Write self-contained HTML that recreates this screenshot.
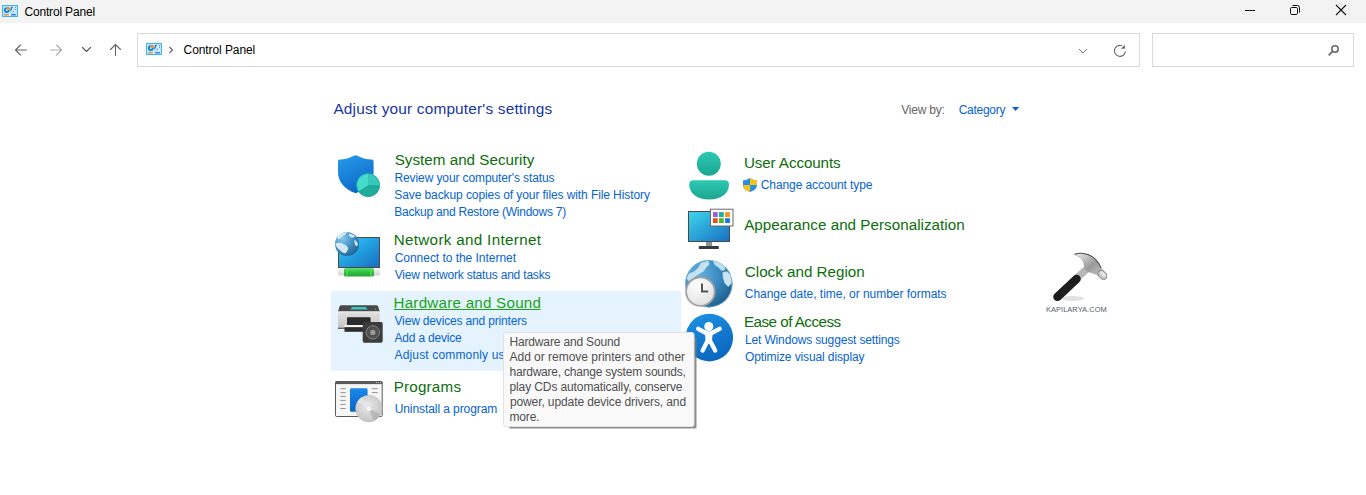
<!DOCTYPE html>
<html><head><meta charset="utf-8"><title>Control Panel</title>
<style>
html,body{margin:0;padding:0;width:1366px;height:495px;overflow:hidden;background:#fff}
svg{position:absolute;left:0;top:0;font-family:"Liberation Sans",sans-serif}
</style></head><body>
<svg width="1366" height="495" viewBox="0 0 1366 495">
<defs>
 <filter id="tipblur" x="-10%" y="-10%" width="120%" height="120%"><feGaussianBlur stdDeviation="0.7"/></filter>
 <linearGradient id="cpbg" x1="0" y1="0" x2="0" y2="1"><stop offset="0" stop-color="#c6ecff"/><stop offset="1" stop-color="#8fd2f6"/></linearGradient>
 <g id="cpicon">
  <rect x="0.5" y="0.5" width="15" height="11" fill="#bfe5fa" stroke="#3db5f2" stroke-width="1"/>
  <path d="M4.8,2.2 A2.9,2.9 0 1 0 7.7,5.1 L4.8,5.1 Z" fill="#1c80d8"/>
  <circle cx="4.9" cy="5.0" r="1.1" fill="#bfe5fa"/>
  <path d="M5.1,1.7 A3.1,3.1 0 0 1 8.2,4.8 L5.1,4.8 Z" fill="#f28a16"/>
  <path d="M10.8,2.3 Q9.3,2 9.3,3.6 Q9.3,5.3 8.3,5.6" fill="none" stroke="#1a5db4" stroke-width="1.1"/>
  <rect x="11.2" y="2" width="2.6" height="1" fill="#ffffff"/>
  <rect x="11.2" y="4" width="2.6" height="1" fill="#ffffff"/>
  <rect x="11.2" y="6" width="2.6" height="1" fill="#ffffff"/>
  <circle cx="13.3" cy="2.5" r="0.6" fill="#1c70d0"/>
  <circle cx="13.3" cy="4.5" r="0.6" fill="#1c70d0"/>
  <circle cx="11.6" cy="6.5" r="0.6" fill="#1c70d0"/>
  <rect x="2" y="9.2" width="4.9" height="1.2" fill="#f28a16"/>
  <rect x="6.9" y="9.2" width="1.8" height="1.2" fill="#ffffff"/>
  <rect x="9.1" y="9.2" width="4.7" height="1.2" fill="#1c70d0"/>
 </g>
 <linearGradient id="shieldg" x1="0" y1="0" x2="0.4" y2="1"><stop offset="0" stop-color="#279ceb"/><stop offset="1" stop-color="#0d6ac8"/></linearGradient>
 <linearGradient id="netscr" x1="0" y1="0" x2="1" y2="1"><stop offset="0" stop-color="#3ccdf2"/><stop offset="0.45" stop-color="#22a4e2"/><stop offset="1" stop-color="#1a6cc0"/></linearGradient>
 <radialGradient id="globeg" cx="0.3" cy="0.25" r="0.85"><stop offset="0" stop-color="#8ccaec"/><stop offset="0.45" stop-color="#4a98cc"/><stop offset="1" stop-color="#1f5e90"/></radialGradient>
 <linearGradient id="cableg" x1="0" y1="0" x2="0" y2="1"><stop offset="0" stop-color="#5fe06a"/><stop offset="0.5" stop-color="#2fc03e"/><stop offset="1" stop-color="#27a535"/></linearGradient>
 <linearGradient id="cablew" x1="0" y1="0" x2="0" y2="1"><stop offset="0" stop-color="#f4f4f4"/><stop offset="1" stop-color="#d0d0d0"/></linearGradient>
 <linearGradient id="userg" x1="0" y1="0" x2="0" y2="1"><stop offset="0" stop-color="#2cc9b4"/><stop offset="1" stop-color="#1ca68f"/></linearGradient>
 <linearGradient id="appscr" x1="0" y1="0" x2="1" y2="1"><stop offset="0" stop-color="#3fd6ea"/><stop offset="1" stop-color="#1670c4"/></linearGradient>
 <radialGradient id="clockg" cx="0.4" cy="0.3" r="0.75"><stop offset="0" stop-color="#ffffff"/><stop offset="1" stop-color="#e0e0e0"/></radialGradient>
 <linearGradient id="easeg" x1="0" y1="0" x2="0.4" y2="1"><stop offset="0" stop-color="#1e94e4"/><stop offset="1" stop-color="#0a68c0"/></linearGradient>
 <radialGradient id="cdg" cx="0.45" cy="0.4" r="0.6"><stop offset="0" stop-color="#f4f4f4"/><stop offset="0.3" stop-color="#dedede"/><stop offset="1" stop-color="#c4c4c4"/></radialGradient>
 <linearGradient id="prbody" x1="0" y1="0" x2="0" y2="1"><stop offset="0" stop-color="#e2e2e2"/><stop offset="1" stop-color="#c2c2c2"/></linearGradient>
 <linearGradient id="hamhead" x1="0" y1="0" x2="1" y2="1"><stop offset="0" stop-color="#f0f0f0"/><stop offset="0.5" stop-color="#9a9a9a"/><stop offset="1" stop-color="#d8d8d8"/></linearGradient>
 <linearGradient id="progblue" x1="0" y1="0" x2="0" y2="1"><stop offset="0" stop-color="#1a8ae8"/><stop offset="1" stop-color="#0a62c6"/></linearGradient>
 <radialGradient id="globe2" cx="0.3" cy="0.3" r="0.8"><stop offset="0" stop-color="#66b2de"/><stop offset="0.5" stop-color="#3b8cc2"/><stop offset="1" stop-color="#1c5d8a"/></radialGradient>
</defs>

<!-- title bar -->
<rect x="0" y="0" width="1366" height="23" fill="#f3f3f3"/>
<use href="#cpicon" x="2" y="5"/>
<!-- window controls -->
<g stroke="#111" stroke-width="1" fill="none">
 <path d="M1245,10.5 H1255"/>
 <rect x="1290.5" y="7.5" width="7" height="7" rx="1.2"/>
 <path d="M1292.5,5.5 H1297.5 Q1299.5,5.5 1299.5,7.5 V12.5"/>
 <path d="M1336,5 L1346,15 M1346,5 L1336,15" stroke-width="1.1"/>
</g>

<!-- nav -->
<g fill="none" stroke-linecap="round" stroke-linejoin="round">
 <path d="M15.5,50 H26.5 M20.5,45 L15.5,50 L20.5,55" stroke="#666" stroke-width="1.1"/>
 <path d="M50.5,50 H61.5 M56.5,45 L61.5,50 L56.5,55" stroke="#adadad" stroke-width="1.1"/>
 <path d="M82.5,47.5 L86.5,51.5 L90.5,47.5" stroke="#555" stroke-width="1.1"/>
 <path d="M115.5,44.5 V55.5 M110.5,49.5 L115.5,44.5 L120.5,49.5" stroke="#666" stroke-width="1.1"/>
</g>
<!-- address bar -->
<rect x="137.5" y="33.5" width="1002" height="33" fill="#fff" stroke="#d9d9d9" stroke-width="1"/>
<use href="#cpicon" x="146" y="43"/>
<path d="M169.5,47 L172.5,50 L169.5,53" fill="none" stroke="#666" stroke-width="1.2"/>
<path d="M1079,49 L1083,53 L1087,49" fill="none" stroke="#777" stroke-width="1"/>
<path d="M1121.8,45.7 A5.5,5.5 0 1 0 1125.4,51.4" fill="none" stroke="#6a6a6a" stroke-width="1.1"/>
<path d="M1120.9,48.7 L1124.9,48.7 L1124.9,44.7 Z" fill="#6a6a6a"/>
<rect x="1152.5" y="33.5" width="201" height="33" fill="#fff" stroke="#d9d9d9" stroke-width="1"/>
<circle cx="1335" cy="49" r="3.2" fill="none" stroke="#666" stroke-width="1.5"/>
<path d="M1328.6,55.4 L1332.6,51.4" stroke="#666" stroke-width="1.6"/>

<path d="M1012,107 H1019.2 L1015.6,110.9 Z" fill="#0664d0"/>
<!-- hover bg -->
<rect x="331" y="291" width="350" height="80" rx="1.5" fill="#e5f3ff"/>

<!-- System and Security icon -->
<path d="M338,161.2 Q338,159.6 339.8,159.6 C345,159.5 349.8,157.8 353.4,155.9 Q355.6,154.8 357.8,155.9 C361.4,157.8 366.2,159.5 371.8,159.6 Q373.6,159.6 373.6,161.2 L373.6,172 C373.6,182 366,189.5 355.6,193.2 C345,189.5 338,182 338,172 Z" fill="url(#shieldg)"/>
<circle cx="368.2" cy="185.2" r="11.6" fill="#22ad9c"/>
<path d="M368.2,185.2 L358.4,191.4 A11.6,11.6 0 0 1 368.2,173.6 Z" fill="#46dccd"/>
<path d="M368.2,185.2 L368.2,173.6 A11.6,11.6 0 0 1 379.8,185.2 Z" fill="#36cbbb"/>
<path d="M368.2,185.2 L379.8,185.2 A11.6,11.6 0 0 1 358.4,191.4 Z" fill="#21ab9a"/>
<circle cx="368.2" cy="185.2" r="11.3" fill="none" stroke="#1f9e8f" stroke-width="0.6" opacity="0.6"/>

<!-- Network icon -->
<rect x="338.5" y="237.5" width="41" height="30" fill="url(#netscr)" stroke="#4a4a4a" stroke-width="1"/>
<rect x="338" y="269" width="42" height="6.5" rx="1" fill="url(#cablew)"/>
<rect x="344" y="268" width="30" height="8.5" rx="1.5" fill="url(#cableg)"/>
<path d="M347,268.2 V276.3 M371,268.2 V276.3" stroke="#7ae884" stroke-width="0.8"/>
<circle cx="347" cy="244" r="12" fill="url(#globeg)"/>
<path d="M337.5,236.5 q4,-4 10,-4.5 q-2,3 -5,4 q-2,3 -4.5,3.5 Z M349,233.5 q4,0.5 6.5,3 q-2,1.5 -4,1 q-3,-1 -2.5,-4 Z M335.2,244 q4,-2.5 8,0 q4,1 5,4.5 q-1,4 -3.5,5 q-3,-1 -5,-3.5 q-3,-2 -4.5,-6 Z M354.5,239.5 q2.5,1.5 3.5,4.5 q-0.5,3 -2.5,1.5 q-1.5,-3 -1,-6 Z" fill="#e2f2fa" opacity="0.9"/>

<!-- Printer icon -->
<path d="M341.5,305.2 H376.2 Q377.6,305.2 378.2,306.4 L379.7,311.8 H338 L339.5,306.4 Q340.1,305.2 341.5,305.2 Z" fill="#4a4a4a"/>
<rect x="338" y="311.5" width="41.7" height="17.5" rx="1" fill="url(#prbody)"/>
<rect x="338" y="327.6" width="41.7" height="1.4" fill="#6a6a6a"/>
<rect x="338" y="311.5" width="41.7" height="1.2" fill="#e8e8e8"/>
<path d="M350.5,309.6 L352,307 H366 L367.5,309.6 Z" fill="#33c9c0"/>
<circle cx="375.5" cy="309.2" r="0.6" fill="#2fe84a"/>
<rect x="347" y="317.2" width="23.6" height="8" rx="0.8" fill="#2b2b2b"/>
<rect x="344.5" y="325" width="21.5" height="2.2" fill="#f4f4f4"/>
<rect x="344.5" y="327.2" width="21.5" height="4.6" fill="#2d2d2d"/>
<rect x="362.7" y="322.1" width="20" height="20.6" rx="1.6" fill="#3c3c3c"/>
<circle cx="372.8" cy="332.4" r="6.7" fill="#505050" stroke="#9a9a9a" stroke-width="0.7"/>
<circle cx="372.8" cy="332.4" r="2.6" fill="#9a9a9a"/>

<!-- Programs icon -->
<rect x="335.5" y="381.5" width="46.7" height="35" rx="1" fill="#f6f6f6" stroke="#5a5a5a" stroke-width="1"/>
<rect x="335.5" y="381.5" width="46.7" height="2.6" fill="#5a5a5a"/>
<circle cx="376.3" cy="382.6" r="0.55" fill="#ddd"/><circle cx="378.3" cy="382.6" r="0.55" fill="#ddd"/><circle cx="380.3" cy="382.6" r="0.55" fill="#ddd"/>
<g stroke="#8a8a8a" stroke-width="0.9">
 <path d="M340.3,388.7 h5.5 M340.3,392.6 h5.5 M340.3,396.4 h5.5 M340.3,400.4 h5.5 M340.3,404.4 h5.5 M340.3,408.5 h5.5"/>
 <path d="M371.8,388.7 h6 M371.8,392.6 h6"/>
</g>
<rect x="350" y="388.2" width="17.6" height="23.6" rx="1.3" fill="url(#progblue)"/>
<circle cx="368.8" cy="408.6" r="13.3" fill="url(#cdg)" stroke="#b0b0b0" stroke-width="0.4"/>
<path d="M368.8,408.6 L357,402 A13.3,13.3 0 0 1 362,397 Z" fill="#e6e6e6" opacity="0.8"/>
<path d="M368.8,408.6 L380,414 A13.3,13.3 0 0 1 374,420.8 Z" fill="#a8a8a8" opacity="0.6"/>
<path d="M357.5,403.5 L364,406.5" stroke="#ecc4e8" stroke-width="0.8" opacity="0.7"/>
<path d="M374,403 L379,399" stroke="#c8f0d0" stroke-width="0.8" opacity="0.7"/>
<circle cx="368.8" cy="408.6" r="3" fill="#f4f4f4" stroke="#c8c8c8" stroke-width="0.6"/>

<!-- User Accounts icon -->
<circle cx="708.8" cy="163.8" r="12" fill="url(#userg)"/>
<path d="M689.2,184.5 Q689.2,180.2 693.5,180.2 H724.8 Q729,180.2 729,184.5 C729,194 720.5,199.5 709.1,199.5 C697.7,199.5 689.2,194 689.2,184.5 Z" fill="url(#userg)"/>
<!-- UAC shield -->
<g>
 <path d="M743,180.5 Q747,180 750,178 Q753,180 757,180.5 V185 Q757,190 750,192 Q743,190 743,185 Z" fill="#2a8fe2"/>
 <path d="M750,178 Q753,180 757,180.5 V185 H750 Z" fill="#f7c21a"/>
 <path d="M743,185 H750 V192 Q743,190 743,185 Z" fill="#f7c21a"/>
</g>

<!-- Appearance icon -->
<rect x="688.5" y="211.5" width="41" height="30" fill="url(#appscr)" stroke="#4a4a4a" stroke-width="1"/>
<rect x="706" y="242" width="6" height="4.2" fill="#8a9699"/>
<rect x="698.8" y="246" width="20" height="3" rx="0.5" fill="#3a3a3a"/>
<rect x="710.5" y="209.2" width="22.5" height="16.8" fill="#fff" stroke="#6a6a6a" stroke-width="1"/>
<rect x="713" y="212.1" width="4.7" height="4.9" fill="#9a5bd6"/>
<rect x="719" y="212.1" width="4.8" height="4.9" fill="#1cae9e"/>
<rect x="725.1" y="212.1" width="4.8" height="4.9" fill="#f39417"/>
<rect x="713" y="218.2" width="4.7" height="4.8" fill="#e44f1a"/>
<rect x="719" y="218.2" width="4.8" height="4.8" fill="#4db82c"/>
<rect x="725.1" y="218.2" width="4.8" height="4.8" fill="#1a77dd"/>

<!-- Clock and Region icon -->
<circle cx="708.8" cy="283.7" r="23.7" fill="url(#globe2)"/>
<path d="M687.2,278 L689.3,273.8 L694.6,271.7 L698.8,267.5 L700.9,263.3 L708.2,261.2 L709.3,264.3 L705.6,267.5 L704,270.6 L698.8,273.8 L695.6,275.9 L691.4,279 L688.3,280.6 Z" fill="#cfe8f4" stroke="#cfe8f4" stroke-width="0.8" stroke-linejoin="round" opacity="0.92"/>
<path d="M713.5,261.2 L718.7,262.2 L724,265.4 L725,269.6 L721.9,270.6 L718.7,267.5 L714.5,264.3 Z" fill="#cfe8f4" stroke="#cfe8f4" stroke-width="0.8" stroke-linejoin="round" opacity="0.9"/>
<path d="M722.9,272.7 L727.1,271.7 L730.8,275.9 L731.3,283.2 L728.2,286.4 L725,283.2 L723.4,278 Z" fill="#d8eef8" stroke="#d8eef8" stroke-width="0.8" stroke-linejoin="round" opacity="0.92"/>
<circle cx="708.8" cy="283.7" r="23.2" fill="none" stroke="#8ccbe6" stroke-width="1" opacity="0.5"/>
<circle cx="700.4" cy="291.6" r="14.3" fill="url(#clockg)" stroke="#a2a2a2" stroke-width="1.8"/>
<path d="M702,283.4 V291.6 H708.2" fill="none" stroke="#555" stroke-width="2"/>

<!-- Ease of Access icon -->
<circle cx="709.3" cy="337.6" r="23.8" fill="url(#easeg)"/>
<circle cx="708.8" cy="326.5" r="4.5" fill="#fff"/>
<path d="M698.2,328.8 L706,333 M719.6,328.8 L711.6,333 M707.2,341.5 L702.6,350.6 M710.4,341.5 L715.2,350.6" fill="none" stroke="#fff" stroke-width="4.3" stroke-linecap="round"/>
<path d="M704.8,331.2 H712.8 L711.8,343.2 H705.8 Z" fill="#fff"/>

<!-- watermark hammer -->
<ellipse cx="1073" cy="298.5" rx="11" ry="2.5" fill="#d8d8d8" opacity="0.8"/>
<path d="M1083,267.5 L1088.5,272.5 L1078.5,281.5 L1073,276.5 Z" fill="#b8b8b8"/>
<path d="M1076.5,279 L1057.5,296.8" stroke="#1c1c1c" stroke-width="8.5" stroke-linecap="round"/>
<path d="M1074.6,254.3 C1080,252.3 1089,253 1095.5,259.3 C1098.5,262.5 1100.2,265.5 1101,268 L1107,274 L1102.5,279.5 L1097,274.8 C1094,273.5 1090,272 1087.5,271.8 L1084,268.5 C1084.8,264.5 1083.5,260.5 1080.5,257.8 C1079,256.6 1077,255.6 1074.6,254.3 Z" fill="url(#hamhead)" stroke="#8a8a8a" stroke-width="0.5"/>
<path d="M1074.6,254.3 C1080,252.3 1089,253 1095.5,259.3 C1098.5,262.5 1100.2,265.5 1101,268" fill="none" stroke="#555" stroke-width="1.1"/>
<ellipse cx="1102.3" cy="275" rx="3.4" ry="5.2" transform="rotate(-45 1102.3 275)" fill="#c8c8c8" stroke="#6a6a6a" stroke-width="0.7"/>
<ellipse cx="1103.3" cy="274" rx="1.8" ry="3.6" transform="rotate(-45 1103.3 274)" fill="#eeeeee" opacity="0.8"/>
<path d="M1062,291 L1065,294 M1066,287.5 L1069,290.5 M1070,284 L1073,287" stroke="#333" stroke-width="0.6"/>
<text x="1046" y="311.8" font-size="7.4" fill="#525c6e" letter-spacing="0.08" font-family="Liberation Sans">KAPILARYA.COM</text>

<g>
<text x="24.40" y="16" font-size="12" letter-spacing="-0.170" fill="#000">Control Panel</text>
<text x="183.60" y="54" font-size="12" letter-spacing="-0.087" fill="#000">Control Panel</text>
<text x="333.40" y="113.6" font-size="15.4" letter-spacing="0.177" fill="#17369e">Adjust your computer&#x27;s settings</text>
<text x="901.20" y="113.6" font-size="12" letter-spacing="-0.214" fill="#666666">View by:</text>
<text x="958.70" y="113.6" font-size="12" letter-spacing="-0.284" fill="#0664d0">Category</text>
<text x="394.70" y="165" font-size="15.2" letter-spacing="0.018" fill="#0b6e0b">System and Security</text>
<text x="394.50" y="182" font-size="12" letter-spacing="-0.108" fill="#0664d0">Review your computer&#x27;s status</text>
<text x="394.30" y="199" font-size="12" letter-spacing="-0.092" fill="#0664d0">Save backup copies of your files with File History</text>
<text x="394.30" y="216" font-size="12" letter-spacing="-0.233" fill="#0664d0">Backup and Restore (Windows 7)</text>
<text x="393.70" y="245" font-size="15.2" letter-spacing="0.328" fill="#0b6e0b">Network and Internet</text>
<text x="394.70" y="262" font-size="12" letter-spacing="-0.034" fill="#0664d0">Connect to the Internet</text>
<text x="394.70" y="279" font-size="12" letter-spacing="-0.193" fill="#0664d0">View network status and tasks</text>
<text x="393.50" y="308" font-size="15.2" letter-spacing="0.230" fill="#17a517">Hardware and Sound</text>
<text x="394.50" y="325" font-size="12" letter-spacing="-0.163" fill="#0664d0">View devices and printers</text>
<text x="394.50" y="342" font-size="12" letter-spacing="-0.201" fill="#0664d0">Add a device</text>
<text x="394.50" y="359" font-size="12" letter-spacing="0.155" fill="#0664d0">Adjust commonly used mobility settings</text>
<text x="393.70" y="392" font-size="15.2" letter-spacing="0.209" fill="#0b6e0b">Programs</text>
<text x="394.70" y="413" font-size="12" letter-spacing="-0.080" fill="#0664d0">Uninstall a program</text>
<text x="743.90" y="168" font-size="15.2" letter-spacing="-0.097" fill="#0b6e0b">User Accounts</text>
<text x="760.80" y="189" font-size="12" letter-spacing="-0.097" fill="#0664d0">Change account type</text>
<text x="744.20" y="230" font-size="15.2" letter-spacing="0.032" fill="#0b6e0b">Appearance and Personalization</text>
<text x="744.80" y="277" font-size="15.2" letter-spacing="0.004" fill="#0b6e0b">Clock and Region</text>
<text x="744.80" y="298" font-size="12" letter-spacing="-0.028" fill="#0664d0">Change date, time, or number formats</text>
<text x="744.00" y="327" font-size="15.2" letter-spacing="-0.522" fill="#0b6e0b">Ease of Access</text>
<text x="745.00" y="344" font-size="12" letter-spacing="-0.150" fill="#0664d0">Let Windows suggest settings</text>
<text x="745.00" y="361" font-size="12" letter-spacing="-0.116" fill="#0664d0">Optimize visual display</text>
</g>
<rect x="394" y="309" width="146.5" height="1" fill="#17a517"/>
<!-- tooltip -->
<g>
<rect x="498" y="327" width="202" height="105" rx="3" fill="#000" opacity="0.0"/>
<rect x="509" y="337" width="187.5" height="91.5" rx="1.5" fill="#7a7a7a" opacity="0.85" filter="url(#tipblur)"/>
<rect x="503.5" y="332.5" width="190.5" height="94" rx="2" fill="#f9f9f9" stroke="#e2e2e2" stroke-width="1"/>
<text x="509.50" y="346" font-size="12" letter-spacing="-0.161" fill="#4f4f4f">Hardware and Sound</text>
<text x="509.50" y="361" font-size="12" letter-spacing="-0.016" fill="#4f4f4f">Add or remove printers and other</text>
<text x="509.50" y="376" font-size="12" letter-spacing="-0.214" fill="#4f4f4f">hardware, change system sounds,</text>
<text x="509.50" y="391" font-size="12" letter-spacing="-0.114" fill="#4f4f4f">play CDs automatically, conserve</text>
<text x="509.90" y="406" font-size="12" letter-spacing="-0.102" fill="#4f4f4f">power, update device drivers, and</text>
<text x="509.50" y="421" font-size="12" letter-spacing="-0.160" fill="#4f4f4f">more.</text>
</g>
</svg>
</body></html>
